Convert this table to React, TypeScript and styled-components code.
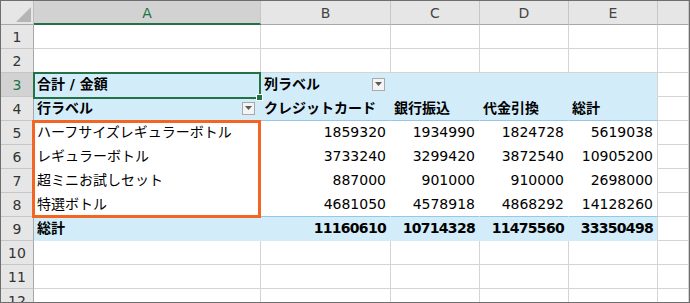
import styled, { createGlobalStyle } from 'styled-components';

const GlobalStyle = createGlobalStyle`
  body {
    margin: 0;
    background: #ffffff;
    font-family: "DejaVu Sans", "Noto Sans CJK JP", sans-serif;
  }
`;

type Kind = 'plain' | 'head' | 'headLast' | 'body' | 'bodyLast' | 'total';

interface CellData {
  text?: string;
  num?: boolean;
  bold?: boolean;
  dropdown?: boolean;
}

const BLUE = '#d2ecf9';
const BLUE_LINE = '#93c8ea';
const GRID = '#d4d4d4';

// the last column is cut off by the window edge, so its letter is not shown
const columns = ['A', 'B', 'C', 'D', 'E', ''];

const rows: { kind: Kind; cells: CellData[] }[] = [
  { kind: 'plain', cells: [] },
  { kind: 'plain', cells: [] },
  {
    kind: 'head',
    cells: [
      { text: '合計 / 金額', bold: true },
      { text: '列ラベル', bold: true, dropdown: true },
    ],
  },
  {
    kind: 'headLast',
    cells: [
      { text: '行ラベル', bold: true, dropdown: true },
      { text: 'クレジットカード', bold: true },
      { text: '銀行振込', bold: true },
      { text: '代金引換', bold: true },
      { text: '総計', bold: true },
    ],
  },
  {
    kind: 'body',
    cells: [
      { text: 'ハーフサイズレギュラーボトル' },
      { text: '1859320', num: true },
      { text: '1934990', num: true },
      { text: '1824728', num: true },
      { text: '5619038', num: true },
    ],
  },
  {
    kind: 'body',
    cells: [
      { text: 'レギュラーボトル' },
      { text: '3733240', num: true },
      { text: '3299420', num: true },
      { text: '3872540', num: true },
      { text: '10905200', num: true },
    ],
  },
  {
    kind: 'body',
    cells: [
      { text: '超ミニお試しセット' },
      { text: '887000', num: true },
      { text: '901000', num: true },
      { text: '910000', num: true },
      { text: '2698000', num: true },
    ],
  },
  {
    kind: 'bodyLast',
    cells: [
      { text: '特選ボトル' },
      { text: '4681050', num: true },
      { text: '4578918', num: true },
      { text: '4868292', num: true },
      { text: '14128260', num: true },
    ],
  },
  {
    kind: 'total',
    cells: [
      { text: '総計', bold: true },
      { text: '11160610', num: true, bold: true },
      { text: '10714328', num: true, bold: true },
      { text: '11475560', num: true, bold: true },
      { text: '33350498', num: true, bold: true },
    ],
  },
  { kind: 'plain', cells: [] },
  { kind: 'plain', cells: [] },
  { kind: 'plain', cells: [] },
];

// colours for a cell: background, right border, bottom border
const cellColors = (kind: Kind, col: number) => {
  const last = col >= 4;
  if (col === 5 || kind === 'plain') return { bg: '#fff', right: GRID, bottom: GRID };
  switch (kind) {
    case 'head':
      return { bg: BLUE, right: last ? GRID : BLUE, bottom: BLUE };
    case 'headLast':
      return { bg: BLUE, right: last ? GRID : BLUE, bottom: BLUE_LINE };
    case 'body':
      return { bg: '#fff', right: last ? GRID : '#fff', bottom: '#fff' };
    case 'bodyLast':
      return { bg: '#fff', right: last ? GRID : '#fff', bottom: BLUE_LINE };
    case 'total':
      return { bg: BLUE, right: last ? GRID : BLUE, bottom: BLUE };
  }
};

const App = () => {
  return (
    <>
      <GlobalStyle />
      <Sheet>
        <Grid>
          <Corner>
            <svg width="15" height="15" viewBox="0 0 15 15">
              <polygon points="15,0 15,15 0,15" fill="#b5b5b5" />
            </svg>
          </Corner>
          {columns.map((c, i) => (
            <ColHead key={i} $selected={c === 'A'}>
              {c}
            </ColHead>
          ))}
          {rows.map((row, r) => (
            <Row key={r}>
              <RowHead $selected={r === 2}>{r + 1}</RowHead>
              {columns.map((_, c) => {
                const cell = row.cells[c];
                const colors = cellColors(row.kind, c);
                return (
                  <Cell
                    key={c}
                    $bg={colors.bg}
                    $right={colors.right}
                    $bottom={colors.bottom}
                    $num={cell?.num}
                    $bold={cell?.bold}
                  >
                    {cell?.text && (
                      <CellText $tight={cell.num && cell.bold}>{cell.text}</CellText>
                    )}
                    {cell?.dropdown && (
                      <DropButton>
                        <svg width="7" height="4" viewBox="0 0 7 4">
                          <polygon points="0,0 7,0 3.5,4" fill="#5a5a5a" />
                        </svg>
                      </DropButton>
                    )}
                  </Cell>
                );
              })}
            </Row>
          ))}
        </Grid>
        <Selection>
          <FillHandle />
        </Selection>
        <Highlight />
      </Sheet>
    </>
  );
};

const Sheet = styled.div`
  position: relative;
  width: 690px;
  height: 303px;
  box-sizing: border-box;
  border: 1px solid #6e6e6e;
  overflow: hidden;
  background: #fff;
`;

const Grid = styled.div`
  display: grid;
  grid-template-columns: 33px 227px 130px 89px 89px 89px 31px;
  grid-template-rows: 24px;
  grid-auto-rows: 24px;
`;

const Row = styled.div`
  display: contents;
`;

const Corner = styled.div`
  box-sizing: border-box;
  background: #e6e6e6;
  border-right: 1px solid #bdbdbd;
  border-bottom: 1px solid #a8a8a8;
  display: flex;
  align-items: flex-end;
  justify-content: flex-end;
  padding: 0 2px 2px 0;
`;

const ColHead = styled.div<{ $selected?: boolean }>`
  box-sizing: border-box;
  background: ${p => (p.$selected ? '#d2d2d2' : '#e6e6e6')};
  color: ${p => (p.$selected ? '#217346' : '#444')};
  border-right: 1px solid #c6c6c6;
  border-bottom: ${p => (p.$selected ? '2px solid #217346' : '1px solid #a8a8a8')};
  display: flex;
  align-items: center;
  justify-content: center;
  font-size: 14px;
  padding-top: ${p => (p.$selected ? '1px' : '0')};
`;

const RowHead = styled.div<{ $selected?: boolean }>`
  box-sizing: border-box;
  background: ${p => (p.$selected ? '#d2d2d2' : '#e6e6e6')};
  color: ${p => (p.$selected ? '#217346' : '#333')};
  border-right: 1px solid #a8a8a8;
  border-bottom: 1px solid #c6c6c6;
  display: flex;
  align-items: center;
  justify-content: center;
  font-size: 14px;
`;

const Cell = styled.div<{
  $bg: string;
  $right: string;
  $bottom: string;
  $num?: boolean;
  $bold?: boolean;
}>`
  box-sizing: border-box;
  background: ${p => p.$bg};
  border-right: 1px solid ${p => p.$right};
  border-bottom: 1px solid ${p => p.$bottom};
  display: flex;
  align-items: center;
  justify-content: ${p => (p.$num ? 'flex-end' : 'flex-start')};
  padding: 0 4px 1px ${p => (p.$num ? '0' : '3px')};
  font-size: 14px;
  font-weight: ${p => (p.$bold ? 700 : 400)};
  color: #000;
  white-space: nowrap;
  min-width: 0;
`;

const CellText = styled.span<{ $tight?: boolean }>`
  letter-spacing: ${p => (p.$tight ? '-0.7px' : '0')};
  line-height: 1;
`;

const DropButton = styled.div`
  box-sizing: border-box;
  width: 13px;
  height: 13px;
  margin-left: auto;
  margin-right: 1px;
  flex: none;
  background: #f4f4f4;
  border: 1px solid #a9a9a9;
  display: flex;
  align-items: center;
  justify-content: center;
`;

const Selection = styled.div`
  position: absolute;
  left: 32px;
  top: 71px;
  width: 228px;
  height: 27px;
  box-sizing: border-box;
  border: 2px solid #217346;
  pointer-events: none;
`;

const FillHandle = styled.div`
  position: absolute;
  right: -4px;
  bottom: -4px;
  width: 5px;
  height: 5px;
  background: #217346;
  border: 1px solid #fff;
`;

const Highlight = styled.div`
  position: absolute;
  left: 31px;
  top: 119px;
  width: 229px;
  height: 98px;
  box-sizing: border-box;
  border: 3px solid #f26522;
  pointer-events: none;
`;

export default App;
